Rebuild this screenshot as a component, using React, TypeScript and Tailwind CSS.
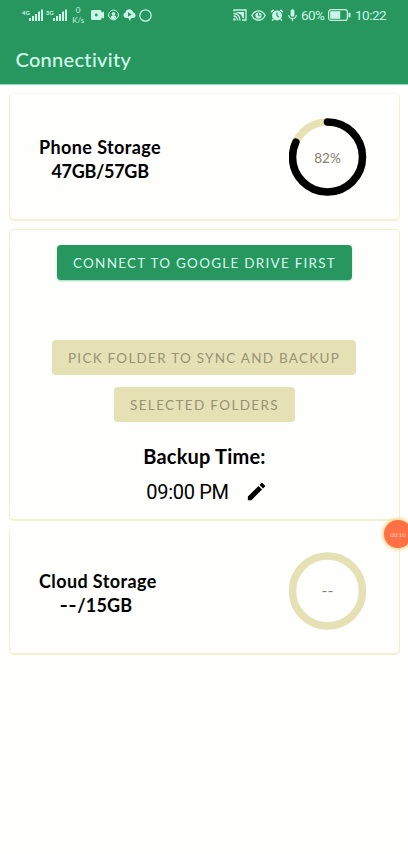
import { MdMic, MdEdit } from "react-icons/md";
import type { ReactNode } from "react";

function Signal({ label }: { label: string }) {
  return (
    <div className="flex h-3 items-end">
      <span className="-mr-px self-start text-[6px] leading-[7px] font-bold">{label}</span>
      <svg width="14" height="12" viewBox="0 0 14 12" fill="currentColor">
        <rect x="0" y="9" width="2" height="3" />
        <rect x="3" y="7" width="2" height="5" />
        <rect x="6" y="5" width="2" height="7" />
        <rect x="9" y="2.5" width="2" height="9.5" />
        <rect x="12" y="0.500" width="2" height="11.500" />
      </svg>
    </div>
  );
}

function CastIcon() {
  return (
    <svg width="14" height="12" viewBox="0 0 14 12" fill="none" stroke="currentColor" strokeWidth="1.300">
      <path d="M1 2.500V1h12v10H9" />
      <path d="M3.500 3h7.500v6H9.500C9.200 6 7 4.300 3.500 4z" fill="currentColor" stroke="none" />
      <path d="M.5 4.500c4 0 6.500 2.500 6.500 7M.5 7c2.500 0 4 1.500 4 4.500" />
      <circle cx="1.300" cy="10.500" r="1.200" fill="currentColor" stroke="none" />
    </svg>
  );
}

function CameraIcon() {
  return (
    <svg width="13" height="10" viewBox="0 0 13 10" fill="currentColor">
      <path fillRule="evenodd" d="M1.500 0h7.500q1.500 0 1.500 1.500v1L13 1.500v7l-2.500-1v1Q10.500 10 9 10H1.500Q0 10 0 8.500v-7Q0 0 1.500 0zM5.300 3.600a1.400 1.400 0 1 0 0 2.800 1.400 1.400 0 0 0 0-2.800z" />
    </svg>
  );
}

function AccountIcon() {
  return (
    <svg width="11" height="12" viewBox="0 0 11 12" fill="none" stroke="currentColor">
      <circle cx="5.500" cy="6" r="4.900" />
      <circle cx="5.500" cy="4.700" r="1.700" fill="currentColor" stroke="none" />
      <path d="M2.500 9.300c0-4 6-4 6 0-1.500 1.500-4.500 1.500-6 0z" fill="currentColor" stroke="none" />
    </svg>
  );
}

function CloudIcon() {
  return (
    <svg width="13" height="12" viewBox="0 0 13 12" fill="currentColor">
      <path fillRule="evenodd" d="M3 9a2.800 2.800 0 0 1-.5-5.500C3.200-.7 9.300-.8 10 3.300 13.500 4 13.400 9 10 9H8.500L6.500 12l-1-3zM5 3.200v4.600l3.700-2.300z" />
    </svg>
  );
}

function AlarmIcon() {
  return (
    <svg width="14" height="12" viewBox="0 0 14 12" fill="none" stroke="currentColor" strokeWidth="1.600">
      <circle cx="7" cy="6.500" r="5" fill="currentColor" stroke="none" />
      <path d="M1 3.200 3.800.8M13 3.200 10.200.8M3.300 10.300 2 11.600M10.700 10.300 12 11.600" />
      <path d="M7 3.500v3.200l2 1.200" stroke="#27975f" strokeWidth="1.200" />
    </svg>
  );
}

function EyeIcon() {
  return (
    <svg width="15" height="11" viewBox="0 0 15 11" fill="none" stroke="currentColor" strokeWidth="1.300">
      <path d="M.8 5.500C4-.8 11-.8 14.200 5.500 11 11.800 4 11.800.8 5.500z" />
      <circle cx="7.500" cy="5.500" r="3.100" fill="currentColor" stroke="none" />
      <path d="M7.500 3.200v2.500h2" stroke="#27975f" strokeWidth="1" />
    </svg>
  );
}

function StatusBar() {
  return (
    <div className="flex h-[30px] items-center pr-[22px] pl-[22px] text-[#c9f5e4]">
      <Signal label="4G" />
      <div className="ml-[3px]"><Signal label="3G" /></div>
      <div className="ml-[4px] w-[15px] text-center text-[8px] leading-[10px]">0<br />K/s</div>
      <div className="ml-[5px] flex items-center gap-[4px]">
        <CameraIcon />
        <AccountIcon />
        <CloudIcon />
        <svg className="-ml-px" width="13" height="13" viewBox="0 0 13 13" fill="none" stroke="currentColor" strokeWidth="1.200">
          <circle cx="6.500" cy="6.500" r="5.700" />
        </svg>
      </div>
      <div className="ml-auto flex items-center">
        <CastIcon />
        <span className="ml-[4px]"><EyeIcon /></span>
        <span className="ml-[4px]"><AlarmIcon /></span>
        <MdMic className="ml-[1px] size-[15px]" />
        <span className="ml-[1px] w-[25px] font-['Roboto',sans-serif] text-[13.500px] tracking-[-0.600px]">60%</span>
        <svg className="ml-[2px]" width="23" height="12" viewBox="0 0 23 12" fill="none" stroke="currentColor">
          <rect x="0.600" y="0.600" width="18.800" height="10.800" rx="2.500" strokeWidth="1.200" />
          <rect x="2.200" y="2.200" width="10" height="7.600" fill="currentColor" stroke="none" />
          <rect x="20.500" y="3.500" width="2" height="5" rx="1" fill="currentColor" stroke="none" />
        </svg>
        <span className="ml-[4px] w-[31px] font-['Roboto',sans-serif] text-[13.500px] tracking-[-0.500px]">10:22</span>
      </div>
    </div>
  );
}

function Ring({ percent, label }: { percent: number; label: string }) {
  return (
    <svg width="78" height="78" viewBox="0 0 78 78" fill="none" strokeWidth="7.500">
      <circle cx="38.500" cy="39" r="35" stroke="#e6e1b4" />
      {percent > 0 ? (
        <>
          <circle cx="38.500" cy="39" r="35" stroke="#000" strokeLinecap="round" pathLength="100" strokeDasharray={`${percent} 100`} transform="rotate(-90 38.500 39)" />
          <text x="38.500" y="44.500" textAnchor="middle" fill="#85816d" fontSize="13.500">{label}</text>
        </>
      ) : (
        <text x="38.500" y="44" textAnchor="middle" fill="#85816d" fontSize="13.500" textLength="12" lengthAdjust="spacingAndGlyphs">{label}</text>
      )}
    </svg>
  );
}

function Card({ children, className }: { children: ReactNode; className: string }) {
  return <section className={`mr-[8px] ml-[9px] rounded-[5px] border border-b-2 border-[#f3efcf] ${className}`}>{children}</section>;
}

function StorageCard({ title, usage, percent, label, className }: { title: string; usage: ReactNode; percent: number; label: string; className: string }) {
  return (
    <Card className={`flex items-center justify-between pr-[32px] pl-[29px] ${className}`}>
      <div className="pt-[5px] text-center text-[18px] leading-6 font-bold">
        <p className="tracking-[0.400px]">{title}</p>
        <p className="tracking-[-0.300px]">{usage}</p>
      </div>
      <Ring percent={percent} label={label} />
    </Card>
  );
}

export default function App() {
  return (
    <main className="relative h-[854px] w-[408px] overflow-hidden bg-[#fefefc] font-['Lato','Noto_Sans',sans-serif] text-black [font-variant-ligatures:none]">
      <header className="h-[85px] border-b border-[#8ee0bb] bg-[#27975f]">
        <StatusBar />
        <h1 className="pt-[14px] pl-[15.500px] text-[20px] leading-[30px] font-medium tracking-[0.300px] text-[#d5fbec]">Connectivity</h1>
      </header>
      <StorageCard title="Phone Storage" usage="47GB/57GB" percent={82} label="82%" className="mt-[8px] h-[128px] border-t-[#fbf9ed]" />
      <Card className="mt-[8px] flex h-[292px] flex-col items-center pt-[15px]">
        <button className="h-[35px] w-[295px] rounded-[4px] bg-[#27975f] pt-[2px] text-[13.500px] tracking-[1.250px] whitespace-nowrap text-[#d5fbec] shadow-[0_1px_2px_#8ee0bb]">CONNECT TO GOOGLE DRIVE FIRST</button>
        <button className="mt-[60px] mr-px h-[35px] w-[304px] rounded-[4px] bg-[#e6e1b4] pt-[2px] text-[13.500px] tracking-[1.250px] whitespace-nowrap text-[#989276]">PICK FOLDER TO SYNC AND BACKUP</button>
        <button className="mt-[12px] h-[35px] w-[181px] rounded-[4px] bg-[#e6e1b4] pt-[2px] text-[13.500px] tracking-[1.350px] whitespace-nowrap text-[#989276]">SELECTED FOLDERS</button>
        <h2 className="mt-[19px] text-[20px] leading-[30px] font-bold tracking-[0.200px]">Backup Time:</h2>
        <div className="mt-[6px] flex items-center gap-[16px] pl-[5px]">
          <span className="font-['Roboto',sans-serif] text-[20px] leading-[30px] tracking-[-0.300px]">09:00 PM</span>
          <MdEdit className="size-[23px] -translate-y-px" />
        </div>
      </Card>
      <StorageCard title="Cloud Storage" usage={<span className="tracking-[0.200px]"><span className="inline-block origin-right scale-x-125">--</span>/15GB</span>} percent={0} label="--" className="mt-[6px] h-[128px] border-t-[#fefefc]" />
      <div className="absolute top-[520px] left-[384px] flex size-[28px] items-center justify-center rounded-full bg-[#ff7044] text-[6px] text-[#ffd9c6] shadow-[0_0_3px_2px_#f9d99a]">00:10</div>
    </main>
  );
}
